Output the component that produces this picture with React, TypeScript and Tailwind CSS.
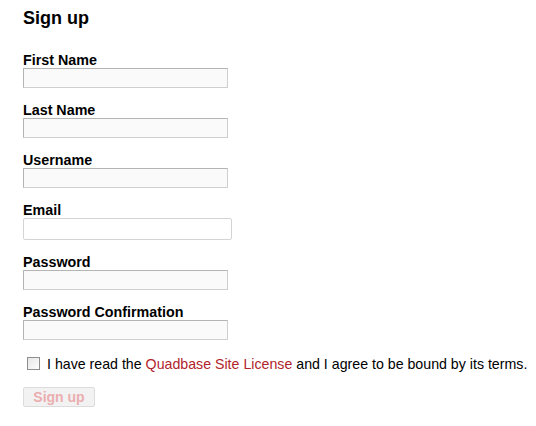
const fields = [
  { label: 'First Name', kind: 'text' },
  { label: 'Last Name', kind: 'text' },
  { label: 'Username', kind: 'text' },
  { label: 'Email', kind: 'email' },
  { label: 'Password', kind: 'text' },
  { label: 'Password Confirmation', kind: 'text' },
]

export default function App() {
  return (
    <div className="min-h-[426px] w-[536px] bg-white pl-[23px] pt-[7px] text-black font-['Liberation_Sans',Arial,sans-serif]">
      <h1 className="text-[18px] font-bold leading-[22px]">Sign up</h1>
      <form className="mt-[23px] flex flex-col gap-[14px]">
        {fields.map((f) => (
          <div key={f.label} className="flex flex-col">
            <label className="text-[14.3px] font-bold leading-[16px]">{f.label}</label>
            {f.kind === 'email' ? (
              <input
                type="email"
                className="h-[22px] w-[209px] rounded-[2px] border border-[#d4d4d4] bg-white outline-none"
              />
            ) : (
              <input
                type="text"
                className="h-[20px] w-[205px] border border-[#b4b4b4] border-b-[#cfcfcf] border-r-[#cfcfcf] bg-[#fafafa] outline-none"
              />
            )}
          </div>
        ))}
        <div className="flex items-start text-[14.2px] leading-[20px]">
          <span className="ml-[4px] mr-[7px] mt-[3px] block h-[13px] w-[13px] shrink-0 border border-[#8e8e8e] bg-gradient-to-br from-[#e6e6e6] to-[#fdfdfd]" />
          <span>
            I have read the <a className="text-[#b1242b]">Quadbase Site License</a> and I agree to be bound by its
            terms.
          </span>
        </div>
        <div className="mt-[-1px] flex">
          <button
            type="button"
            className="h-[20px] w-[72px] rounded-[2px] border border-[#dcdcdc] bg-[#f2f2f2] text-[14px] font-bold leading-[18px] text-[#ebaeb0]"
          >
            Sign up
          </button>
        </div>
      </form>
    </div>
  )
}
